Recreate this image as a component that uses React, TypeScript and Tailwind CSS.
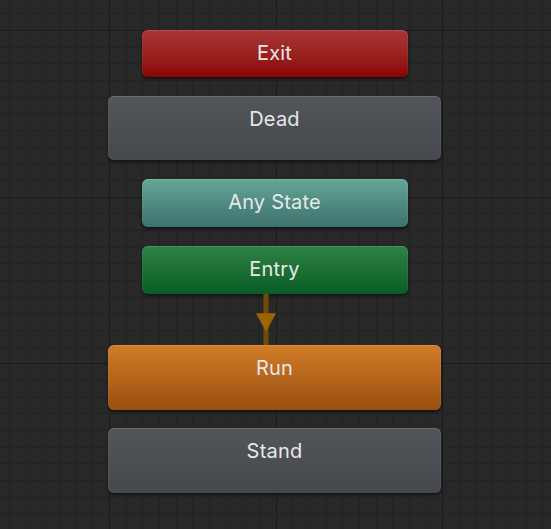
const STEP = 50 / 3;

function Grid() {
  const xs = Array.from({ length: 34 }, (_, k) => k);
  const ys = Array.from({ length: 33 }, (_, k) => k);
  return (
    <svg className="absolute inset-0" width="551" height="529" shapeRendering="crispEdges">
      {xs.map((k) => {
        const x = Math.round(9 + STEP * k) + 0.5;
        const major = (k - 6) % 10 === 0;
        return <line key={"v" + k} x1={x} x2={x} y1={0} y2={529} stroke={major ? "#1b1b1b" : "#222222"} strokeWidth={1} />;
      })}
      {ys.map((k) => {
        const y = Math.round(13.333 + STEP * k) + 0.5;
        const major = (k - 1) % 10 === 0;
        return <line key={"h" + k} x1={0} x2={551} y1={y} y2={y} stroke={major ? "#1b1b1b" : "#222222"} strokeWidth={1} />;
      })}
    </svg>
  );
}

function Node({ label, className }: { label: string; className: string }) {
  return (
    <div
      className={
        "rounded-[6px] pt-[11px] text-center text-[20px] leading-[24px] tracking-[0.2px] text-[#e8e8e8] shadow-[inset_0_1px_0_rgba(255,255,255,0.14),inset_1px_0_0_rgba(255,255,255,0.05),inset_-1px_0_0_rgba(255,255,255,0.05),0_2px_3px_rgba(0,0,0,0.55)] " +
        className
      }
    >
      {label}
    </div>
  );
}

export default function App() {
  return (
    <div className="relative h-[529px] w-[551px] overflow-hidden bg-[#282828] font-['Inter',sans-serif]">
      <Grid />
      <div className="relative ml-[108px] flex w-[333px] flex-col items-center pt-[30px]">
        <Node label="Exit" className="h-[47px] w-[266px] bg-gradient-to-b from-[#a73636] to-[#8c0202]" />
        <div className="h-[19px]" />
        <Node label="Dead" className="h-[64px] w-full bg-gradient-to-b from-[#525559] to-[#45484c]" />
        <div className="h-[19px]" />
        <Node label="Any State" className="h-[48px] w-[266px] bg-gradient-to-b from-[#64a696] to-[#3e716d]" />
        <div className="h-[19px]" />
        <Node label="Entry" className="h-[48px] w-[266px] bg-gradient-to-b from-[#2e8244] to-[#065e25]" />
        <div className="flex h-[51px] w-full">
          <svg className="ml-[146px]" width="24" height="51" viewBox="0 0 24 51">
            <rect x="9" y="0" width="6" height="51" fill="#4d3a14" />
            <rect x="10" y="0" width="4" height="51" fill="#6e4b08" />
            <polygon points="2,19.3 22,19.3 12,37.7" fill="#9b6500" />
          </svg>
        </div>
        <Node label="Run" className="h-[65px] w-full bg-gradient-to-b from-[#d17c28] to-[#9a4f0e]" />
        <div className="h-[18px]" />
        <Node label="Stand" className="h-[65px] w-full bg-gradient-to-b from-[#525559] to-[#45484c]" />
      </div>
    </div>
  );
}
